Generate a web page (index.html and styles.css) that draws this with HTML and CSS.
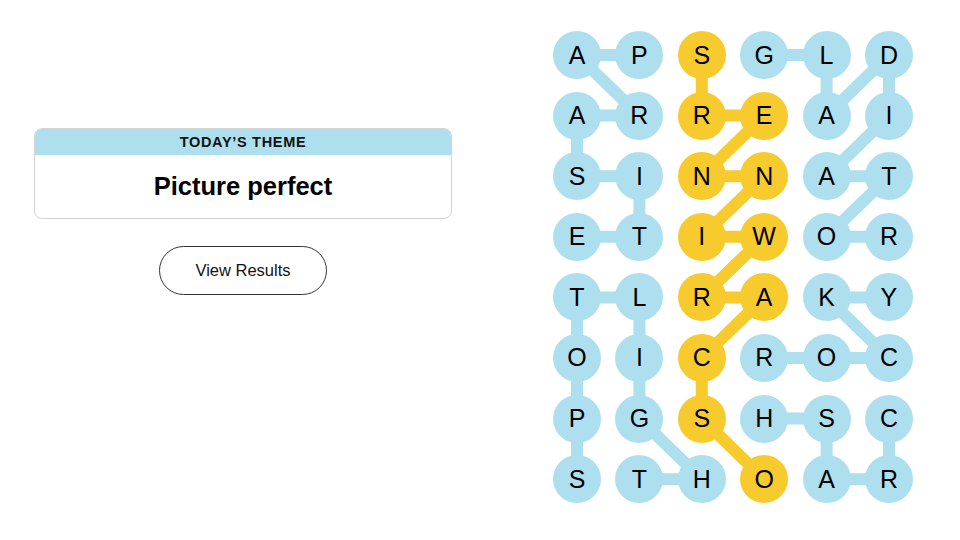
FILE: index.html
```html
<!DOCTYPE html>
<html lang="en">
<head>
<meta charset="utf-8">
<title>Strands</title>
<link rel="stylesheet" href="styles.css">
</head>
<body>
<main class="game">
  <section class="side">
    <div class="theme-card">
      <div class="theme-head">TODAY’S THEME</div>
      <div class="theme-body">Picture perfect</div>
    </div>
    <button class="results-btn">View Results</button>
  </section>
  <section class="board">
    <svg class="links" viewBox="0 0 360 472" width="360" height="472" aria-hidden="true">
      <g fill="none" stroke-width="12" stroke-linejoin="round" stroke-linecap="round">
        <polyline class="blue" points="86.4,24 24,24 86.4,84.6 24,84.6 24,145.2 86.4,145.2 86.4,205.8 24,205.8"/>
        <polyline class="blue" points="24,448.2 24,387.6 24,327 24,266.4 86.4,266.4 86.4,327 86.4,387.6 148.8,448.2 86.4,448.2"/>
        <polyline class="blue" points="211.2,24 273.6,24 273.6,84.6 336,24 336,84.6 273.6,145.2 336,145.2 273.6,205.8 336,205.8"/>
        <polyline class="blue" points="211.2,327 273.6,327 336,327 273.6,266.4 336,266.4"/>
        <polyline class="blue" points="336,387.6 336,448.2 273.6,448.2 273.6,387.6 211.2,387.6"/>
        <polyline class="yellow" points="211.2,448.2 148.8,387.6 148.8,327 211.2,266.4 148.8,266.4 211.2,205.8 148.8,205.8 211.2,145.2 148.8,145.2 211.2,84.6 148.8,84.6 148.8,24"/>
      </g>
    </svg>
    <div class="grid">
      <span class="cell b">A</span><span class="cell b">P</span><span class="cell y">S</span><span class="cell b">G</span><span class="cell b">L</span><span class="cell b">D</span>
      <span class="cell b">A</span><span class="cell b">R</span><span class="cell y">R</span><span class="cell y">E</span><span class="cell b">A</span><span class="cell b">I</span>
      <span class="cell b">S</span><span class="cell b">I</span><span class="cell y">N</span><span class="cell y">N</span><span class="cell b">A</span><span class="cell b">T</span>
      <span class="cell b">E</span><span class="cell b">T</span><span class="cell y">I</span><span class="cell y">W</span><span class="cell b">O</span><span class="cell b">R</span>
      <span class="cell b">T</span><span class="cell b">L</span><span class="cell y">R</span><span class="cell y">A</span><span class="cell b">K</span><span class="cell b">Y</span>
      <span class="cell b">O</span><span class="cell b">I</span><span class="cell y">C</span><span class="cell b">R</span><span class="cell b">O</span><span class="cell b">C</span>
      <span class="cell b">P</span><span class="cell b">G</span><span class="cell y">S</span><span class="cell b">H</span><span class="cell b">S</span><span class="cell b">C</span>
      <span class="cell b">S</span><span class="cell b">T</span><span class="cell b">H</span><span class="cell y">O</span><span class="cell b">A</span><span class="cell b">R</span>
    </div>
  </section>
</main>
</body>
</html>
```

FILE: styles.css
```css
* { box-sizing: border-box; }

html, body {
  margin: 0;
  padding: 0;
  background: #ffffff;
  color: #000000;
  font-family: "Liberation Sans", Arial, sans-serif;
}

.game {
  display: flex;
  align-items: flex-start;
  width: 960px;
  height: 540px;
}

.side {
  width: 452px;
  padding: 128px 0 0 34px;
  display: flex;
  flex-direction: column;
  align-items: center;
  gap: 27px;
}

.theme-card {
  width: 418px;
  border: 1px solid #d4d4d4;
  border-radius: 8px;
  overflow: hidden;
  background: #ffffff;
}

.theme-head {
  background: #aedfee;
  height: 26px;
  line-height: 27px;
  text-align: center;
  font-size: 14.5px;
  font-weight: 700;
  letter-spacing: 0.7px;
  color: #121212;
}

.theme-body {
  height: 63px;
  display: flex;
  align-items: center;
  justify-content: center;
  font-size: 25.5px;
  font-weight: 700;
  padding-bottom: 1px;
}

.results-btn {
  width: 168px;
  height: 49px;
  border: 1px solid #333333;
  border-radius: 25px;
  background: #ffffff;
  font-family: "Liberation Sans", Arial, sans-serif;
  font-size: 16.5px;
  color: #121212;
  padding: 0;
}

.board {
  position: relative;
  margin: 31px 0 0 101px;
  width: 360px;
  height: 472px;
}

.links {
  position: absolute;
  left: 0;
  top: 0;
}

.links .blue { stroke: #aedfee; }
.links .yellow { stroke: #f7cb2d; }

.grid {
  position: relative;
  display: grid;
  grid-template-columns: repeat(6, 48px);
  grid-auto-rows: 48px;
  column-gap: 14.4px;
  row-gap: 12.6px;
}

.cell {
  width: 48px;
  height: 48px;
  border-radius: 50%;
  display: flex;
  align-items: center;
  justify-content: center;
  font-family: "Liberation Sans", Arial, sans-serif;
  font-size: 25px;
  line-height: 1;
  color: #000000;
}

.cell.b { background: #aedfee; }
.cell.y { background: #f7cb2d; }
```
